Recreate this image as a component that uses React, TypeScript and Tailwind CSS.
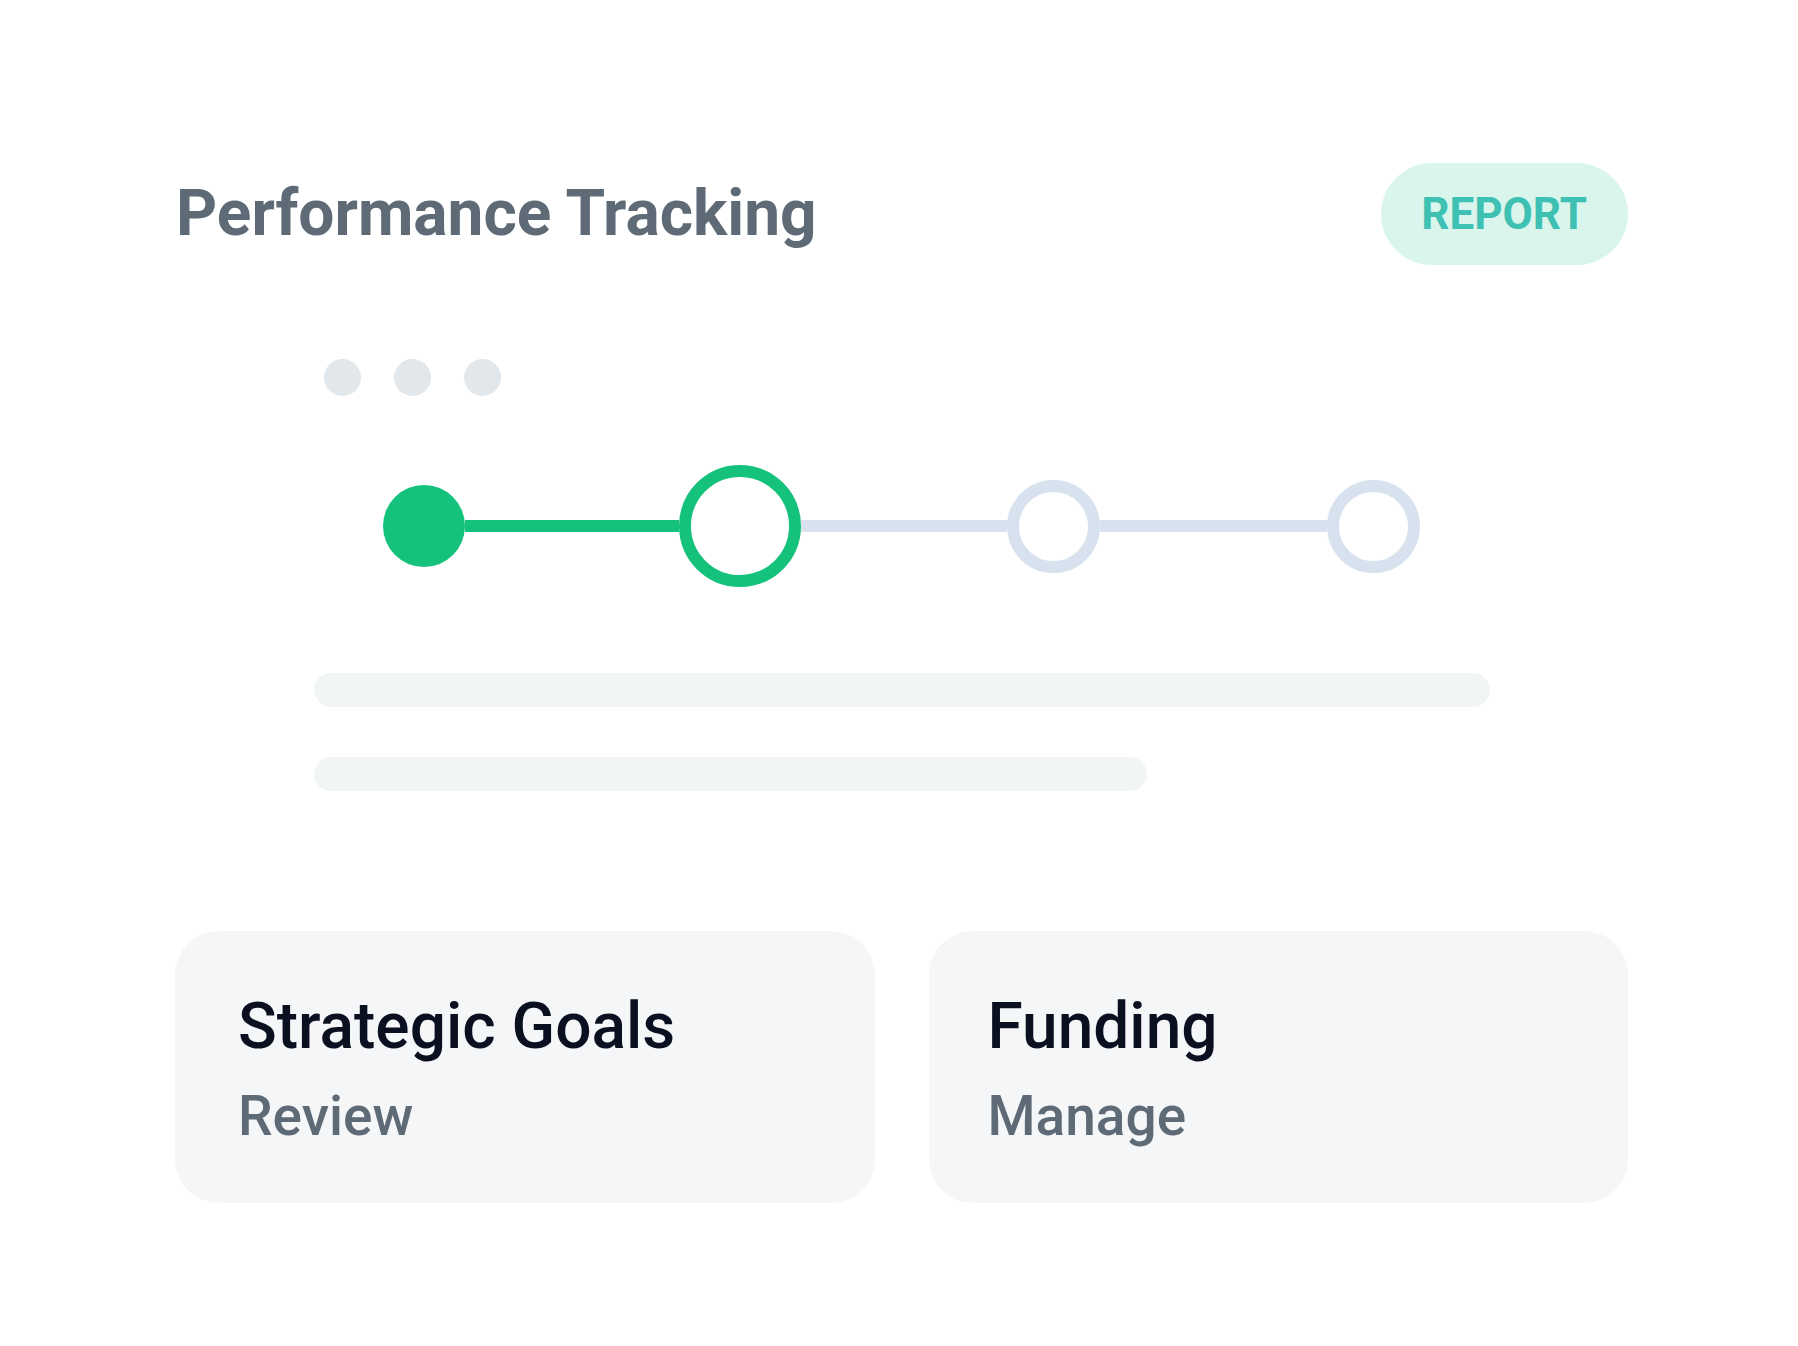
import React from "react";

const font = { fontFamily: "Roboto, 'Noto Sans', sans-serif" };

function Card({ title, action, inset }: { title: string; action: string; inset: string }) {
  return (
    <div className={`h-[272px] rounded-[44px] bg-[#f4f6f8] pt-[56px] ${inset}`}>
      <div className="text-[64px] font-medium leading-[80px] text-[#0a1020]">{title}</div>
      <div className="mt-[14px] text-[55px] font-medium leading-[70px] text-[#5e6a75]">{action}</div>
    </div>
  );
}

export default function App() {
  return (
    <div className="min-h-screen w-full bg-white" style={font}>
      <div className="ml-[175px] w-[1453px] pt-[163px]">
        {/* header */}
        <div className="flex h-[102px] items-center justify-between">
          <h1 className="pl-[1px] text-[64px] font-bold leading-none text-[#5e6a75]">Performance Tracking</h1>
          <button className="flex h-[102px] items-center rounded-full bg-[#d9f5ec] pl-[40px] pr-[41px] text-[44px] font-bold leading-none text-[#3ec1b3]">
            REPORT
          </button>
        </div>

        {/* window dots */}
        <div className="mt-[94px] ml-[149px] flex gap-[33px]">
          <span className="h-[37px] w-[37px] rounded-full bg-[#e2e7eb]" />
          <span className="h-[37px] w-[37px] rounded-full bg-[#e2e7eb]" />
          <span className="h-[37px] w-[37px] rounded-full bg-[#e2e7eb]" />
        </div>

        {/* stepper */}
        <div className="mt-[69px] ml-[208px] flex h-[122px] items-center">
          <span className="h-[82px] w-[82px] shrink-0 rounded-full bg-[#15c27b]" />
          <span className="h-[12px] w-[214px] bg-[#15c27b]" />
          <span className="h-[122px] w-[122px] shrink-0 rounded-full border-[12px] border-[#15c27b] bg-white" />
          <span className="h-[12px] w-[206px] bg-[#d7e2ee]" />
          <span className="h-[93px] w-[93px] shrink-0 rounded-full border-[12px] border-[#d7e2ee] bg-white" />
          <span className="h-[12px] w-[227px] bg-[#d7e2ee]" />
          <span className="h-[93px] w-[93px] shrink-0 rounded-full border-[12px] border-[#d7e2ee] bg-white" />
        </div>

        {/* placeholder lines */}
        <div className="mt-[86px] ml-[139px] flex flex-col gap-[50px]">
          <div className="h-[34px] w-[1176px] rounded-full bg-[#f2f5f6]" />
          <div className="h-[34px] w-[833px] rounded-full bg-[#f2f5f6]" />
        </div>

        {/* cards */}
        <div className="mt-[140px] grid grid-cols-2 gap-[54px]">
          <Card title="Strategic Goals" action="Review" inset="px-[63px]" />
          <Card title="Funding" action="Manage" inset="px-[59px]" />
        </div>
      </div>
    </div>
  );
}
